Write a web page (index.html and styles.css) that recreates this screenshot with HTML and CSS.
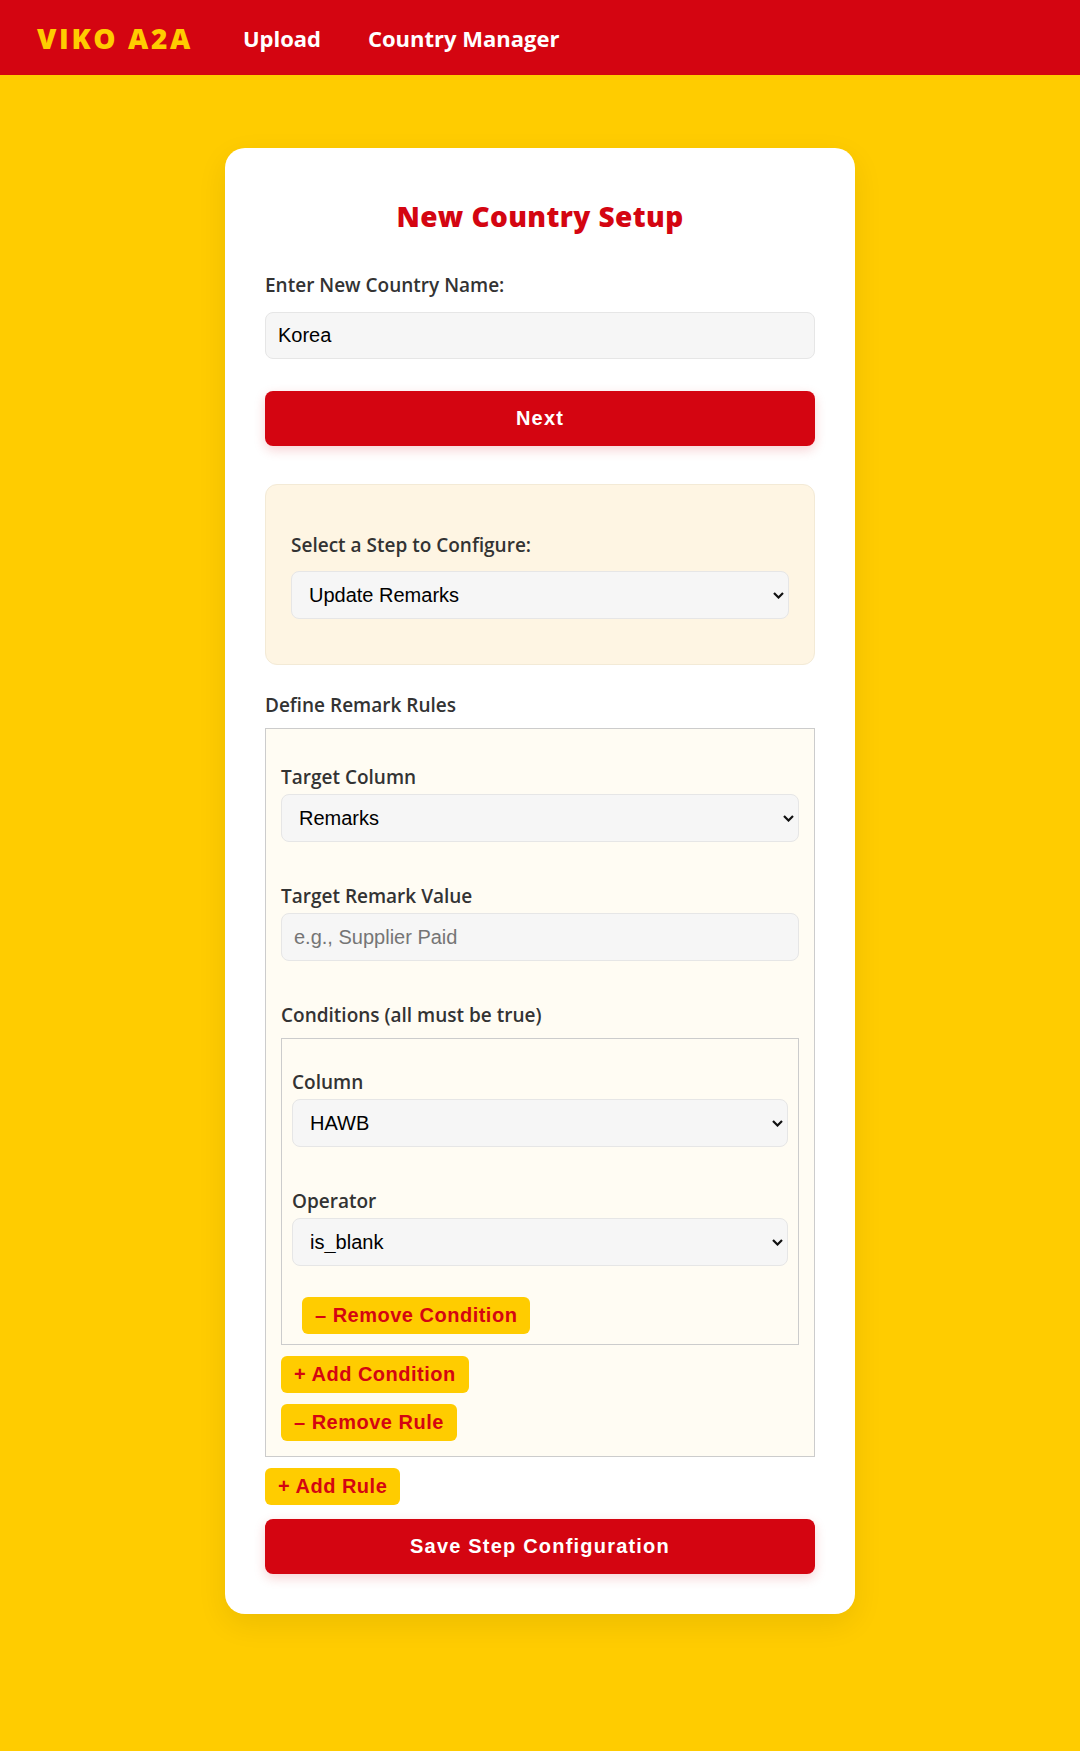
FILE: index.html
```html
<!DOCTYPE html>
<html lang="en">
<head>
<meta charset="utf-8">
<title>VIKO A2A - New Country Setup</title>
<link rel="stylesheet" href="styles.css">
</head>
<body>
<header class="topbar">
  <div class="logo">VIKO A2A</div>
  <nav class="nav">
    <a class="nav-link nav-upload" href="#">Upload</a>
    <a class="nav-link" href="#">Country Manager</a>
  </nav>
</header>
<main class="page">
  <section class="card">
    <h1 class="title">New Country Setup</h1>
    <label class="label label-top" for="country">Enter New Country Name:</label>
    <input class="control control-top" id="country" type="text" value="Korea">
    <button class="btn-primary btn-next" type="button">Next</button>

    <div class="step-box">
      <label class="label label-top label-step" for="step">Select a Step to Configure:</label>
      <div class="select-wrap">
        <select class="control" id="step"><option>Update Remarks</option></select>
        <svg class="chevron" width="11" height="7" viewBox="0 0 11 7"><path d="M1 1 L5.5 5.5 L10 1" fill="none" stroke="#111" stroke-width="2.2"/></svg>
      </div>
    </div>

    <div class="label rules-heading">Define Remark Rules</div>
    <div class="rule-box">
      <label class="label label-box">Target Column</label>
      <div class="select-wrap field-gap">
        <select class="control"><option>Remarks</option></select>
        <svg class="chevron" width="11" height="7" viewBox="0 0 11 7"><path d="M1 1 L5.5 5.5 L10 1" fill="none" stroke="#111" stroke-width="2.2"/></svg>
      </div>
      <label class="label label-box">Target Remark Value</label>
      <input class="control field-gap" type="text" placeholder="e.g., Supplier Paid">
      <label class="label label-box label-cond">Conditions (all must be true)</label>
      <div class="cond-box">
        <label class="label label-box">Column</label>
        <div class="select-wrap field-gap">
          <select class="control"><option>HAWB</option></select>
          <svg class="chevron" width="11" height="7" viewBox="0 0 11 7"><path d="M1 1 L5.5 5.5 L10 1" fill="none" stroke="#111" stroke-width="2.2"/></svg>
        </div>
        <label class="label label-box">Operator</label>
        <div class="select-wrap field-gap-op">
          <select class="control"><option>is_blank</option></select>
          <svg class="chevron" width="11" height="7" viewBox="0 0 11 7"><path d="M1 1 L5.5 5.5 L10 1" fill="none" stroke="#111" stroke-width="2.2"/></svg>
        </div>
        <button class="btn-small btn-remove-cond" type="button">– Remove Condition</button>
      </div>
      <button class="btn-small btn-gap" type="button">+ Add Condition</button>
      <button class="btn-small btn-gap" type="button">– Remove Rule</button>
    </div>
    <button class="btn-small btn-gap" type="button">+ Add Rule</button>
    <button class="btn-primary btn-save" type="button">Save Step Configuration</button>
  </section>
</main>
</body>
</html>
```
FILE: styles.css
```css
* { box-sizing: border-box; }

html, body {
  margin: 0;
  padding: 0;
}

body {
  background: #ffcc00;
  min-height: 1751px;
  font-family: "Open Sans", "Noto Sans", sans-serif;
  color: #333;
}

.topbar {
  height: 75px;
  background: #d40511;
  display: flex;
  align-items: center;
  padding-left: 37px;
}

.logo {
  color: #ffcc00;
  font-family: "Open Sans", sans-serif;
  font-weight: 800;
  font-size: 28px;
  letter-spacing: 2.6px;
  line-height: 1;
  margin-right: 50px;
}

.nav {
  display: flex;
  gap: 47px;
}

.nav-link {
  color: #fff;
  text-decoration: none;
  font-weight: 700;
  font-size: 22px;
  line-height: 1;
}

.page {
  padding-top: 73px;
  padding-bottom: 137px;
}

.card {
  width: 630px;
  margin: 0 auto;
  background: #fff;
  border-radius: 20px;
  padding: 40px;
  display: flex;
  flex-direction: column;
  box-shadow: 0 10px 30px rgba(0, 0, 0, 0.08);
}

.title {
  margin: 10px 0 39px;
  text-align: center;
  font-family: "Open Sans", sans-serif;
  font-size: 28px;
  line-height: 36px;
  font-weight: 800;
  letter-spacing: 0.4px;
  color: #d40511;
}

.label {
  display: block;
  font-size: 19px;
  line-height: 25px;
  font-weight: 600;
  color: #333;
}

.label-top { margin-bottom: 14px; }
.label-step { margin-top: 23px; margin-bottom: 13px; }

.rules-heading {
  margin-top: 28px;
  margin-bottom: 10px;
}

.label-box {
  margin-top: 21px;
  margin-bottom: 4px;
}

.label-cond { margin-bottom: 10px; }

.control {
  display: block;
  width: 100%;
  height: 48px;
  margin: 0;
  padding: 0 12px;
  font-family: "Liberation Sans", Arial, sans-serif;
  font-size: 20px;
  color: #000;
  background: #f6f6f6;
  border: 1px solid #e6e6e6;
  border-radius: 8px;
  outline: none;
}

.control::placeholder { color: #757575; }

.control-top { height: 47px; }

select.control {
  appearance: none;
  -webkit-appearance: none;
  padding-left: 17px;
}

.select-wrap {
  position: relative;
}

.chevron {
  position: absolute;
  right: 5px;
  top: 50%;
  margin-top: -3.5px;
  pointer-events: none;
}

.field-gap { margin-bottom: 21px; }
.field-gap-op { margin-bottom: 0; }

.btn-primary {
  height: 55px;
  border: none;
  border-radius: 8px;
  background: #d40511;
  color: #fff;
  font-family: "Liberation Sans", Arial, sans-serif;
  font-weight: 700;
  font-size: 20px;
  letter-spacing: 1.2px;
  box-shadow: 0 4px 12px rgba(212, 5, 17, 0.18);
  cursor: pointer;
}

.btn-next { margin-top: 32px; }
.btn-save { margin-top: 14px; }

.step-box {
  margin-top: 38px;
  padding: 25px;
  background: #fef5e3;
  border: 1px solid #f3ead6;
  border-radius: 12px;
}

.step-box .select-wrap { margin-bottom: 20px; }

.rule-box {
  display: flex;
  flex-direction: column;
  background: #fffcf3;
  border: 1px solid #cccccc;
  padding: 15px;
}

.cond-box {
  display: flex;
  flex-direction: column;
  border: 1px solid #cccccc;
  padding: 10px;
}

.btn-small {
  align-self: flex-start;
  height: 37px;
  padding: 0 13px;
  border: none;
  border-radius: 6px;
  background: #ffcc00;
  color: #d40511;
  font-family: "Liberation Sans", Arial, sans-serif;
  font-weight: 700;
  font-size: 20px;
  letter-spacing: 0.5px;
  cursor: pointer;
}

.btn-remove-cond {
  margin-top: 31px;
  margin-left: 10px;
}

.btn-gap { margin-top: 11px; }
```
